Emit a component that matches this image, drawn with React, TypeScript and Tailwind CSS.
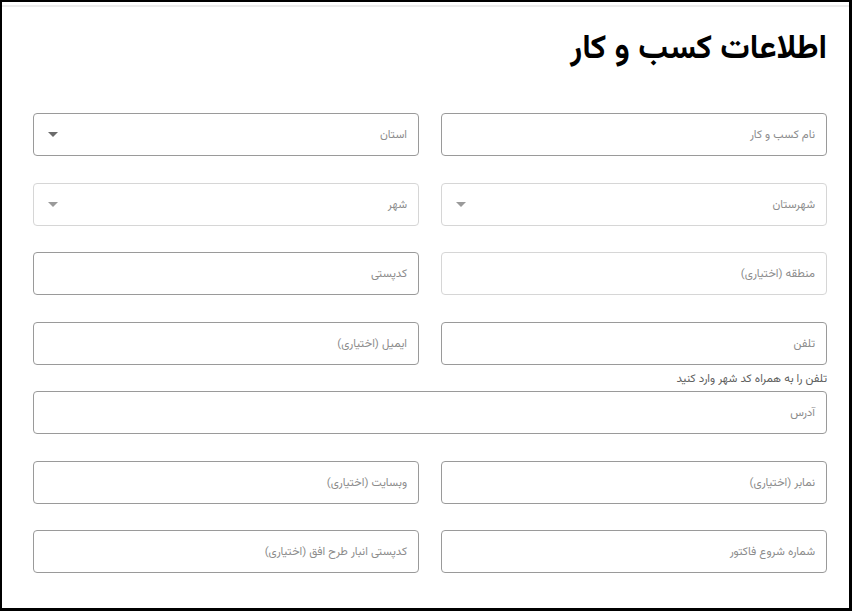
import React from "react";

type F = { label: string; select?: boolean; disabled?: boolean; helper?: string; full?: boolean };

const fields: F[] = [
  { label: "نام کسب و کار" },
  { label: "استان", select: true },
  { label: "شهرستان", select: true, disabled: true },
  { label: "شهر", select: true, disabled: true },
  { label: "منطقه (اختیاری)", disabled: true },
  { label: "کدپستی" },
  { label: "تلفن", helper: "تلفن را به همراه کد شهر وارد کنید" },
  { label: "ایمیل (اختیاری)" },
  { label: "آدرس", full: true },
  { label: "نمابر (اختیاری)" },
  { label: "وبسایت (اختیاری)" },
  { label: "شماره شروع فاکتور" },
  { label: "کدپستی انبار طرح افق (اختیاری)" },
];

function Field({ f }: { f: F }) {
  return (
    <div className={f.full ? "relative col-span-2" : "relative"}>
      <div
        className={
          "h-[43px] rounded-[4px] border flex items-center justify-between pr-[11px] pl-[14px] " +
          (f.disabled ? "border-[#d6d6d6]" : "border-[#9a9a9a]")
        }
      >
        <span className="text-[11.5px] text-[#8c8c8c] pt-[3px]">{f.label}</span>
        {f.select && (
          <svg width="10" height="5" viewBox="0 0 10 5">
            <path d="M0 0 L10 0 L5 5 Z" fill={f.disabled ? "#9a9a9a" : "#6b6b6b"} />
          </svg>
        )}
      </div>
      {f.helper && (
        <div className="absolute top-full right-0 mt-[6px] text-[11.5px] text-[#606060] whitespace-nowrap leading-[16px]">
          {f.helper}
        </div>
      )}
    </div>
  );
}

export default function App() {
  return (
    <div
      dir="rtl"
      className="w-[852px] h-[611px] bg-white border-black border-t-[2px] border-l-[2px] border-r-[3px] border-b-[3px] relative"
      style={{ fontFamily: 'Vazirmatn, "DejaVu Sans", sans-serif' }}
    >
      <div className="absolute top-[3px] left-0 right-0 h-[2px] bg-[#ececec]" />
      <div className="pr-[22px] pl-[31px] pt-[24px]">
        <h1 className="text-[33px] font-bold text-black leading-[48px]">اطلاعات کسب و کار</h1>
        <div className="grid grid-cols-2 gap-x-[22px] gap-y-[26.5px] mt-[39px]">
          {fields.map((f, i) => (
            <Field key={i} f={f} />
          ))}
        </div>
      </div>
    </div>
  );
}
